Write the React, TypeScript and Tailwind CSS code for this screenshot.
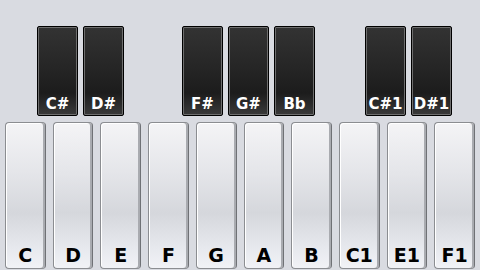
import React from 'react';

const whiteKeys = ['C', 'D', 'E', 'F', 'G', 'A', 'B', 'C1', 'E1', 'F1'];

// black keys with the left margin that separates the groups
const blackKeys = [
  { label: 'C#', gap: 'ml-0' },
  { label: 'D#', gap: 'ml-[5px]' },
  { label: 'F#', gap: 'ml-[58px]' },
  { label: 'G#', gap: 'ml-[5px]' },
  { label: 'Bb', gap: 'ml-[5px]' },
  { label: 'C#1', gap: 'ml-[50px]' },
  { label: 'D#1', gap: 'ml-[5px]' },
];

function BlackKey({ label, gap }: { label: string; gap: string }) {
  return (
    <div
      className={`${gap} w-[41px] h-[90px] rounded-[2px] border border-black shadow-[inset_0_0_0_1px_#6e6e6e] bg-[linear-gradient(to_bottom,#333333_0%,#262626_45%,#1c1c1c_75%,#3a3a3a_100%)] flex items-end justify-center pb-[3px]`}
    >
      <span className="text-white font-bold text-[15px] leading-none">{label}</span>
    </div>
  );
}

function WhiteKey({ label }: { label: string }) {
  return (
    <div className="h-[147px] rounded-[4px] border border-[#8b8d91] border-r-[#6f7175] shadow-[inset_-2px_0_0_#a9abb0,inset_1px_1px_0_#ffffff] bg-[linear-gradient(to_bottom,#f4f4f6_0%,#e4e5e9_35%,#d5d7dc_62%,#e8eaef_88%,#f1f2f6_100%)] flex items-end justify-center pb-[3px]">
      <span className="text-black font-bold text-[19px] leading-none">{label}</span>
    </div>
  );
}

export default function App() {
  return (
    <div
      className="w-[480px] h-[270px] bg-[#d9dbe1] flex flex-col overflow-hidden"
      style={{ fontFamily: '"DejaVu Sans", Verdana, sans-serif' }}
    >
      {/* black keys */}
      <div className="flex pt-[26px] pl-[37px]">
        {blackKeys.map((k) => (
          <BlackKey key={k.label} label={k.label} gap={k.gap} />
        ))}
      </div>

      {/* white keys */}
      <div className="grid grid-cols-10 gap-x-[7px] px-[5px] mt-[6px]">
        {whiteKeys.map((k) => (
          <WhiteKey key={k} label={k} />
        ))}
      </div>
    </div>
  );
}
